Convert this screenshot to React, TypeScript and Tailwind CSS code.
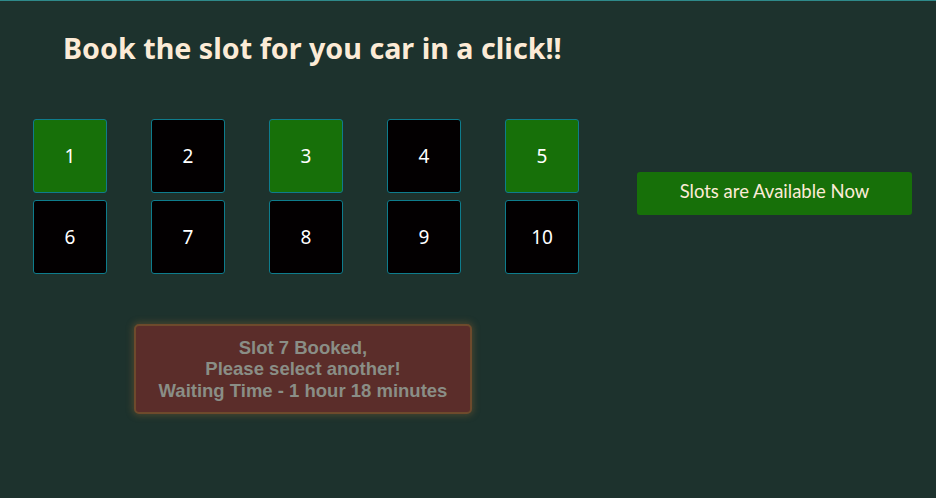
const SLOTS = [1, 2, 3, 4, 5, 6, 7, 8, 9, 10]
const FREE = [1, 3, 5]

function Slot({ n }: { n: number }) {
  const free = FREE.includes(n)
  return (
    <button
      className={
        'w-[74px] h-[74px] rounded-[3px] border border-[#0e7c8c] flex items-center justify-center text-white text-[19px] ' +
        (free ? 'bg-[#177009]' : 'bg-[#030001]')
      }
      style={{ fontFamily: '"Noto Sans", "Open Sans", sans-serif' }}
    >
      {n}
    </button>
  )
}

export default function App() {
  return (
    <div className="w-[936px] h-[498px] bg-[#1d322d] border-t border-[#2e8a8a] overflow-hidden">
      <h1
        className="pl-[63px] pt-[27px] text-[28.7px] font-bold text-[#fcebd6] leading-[40px]"
        style={{ fontFamily: '"Noto Sans", "Open Sans", sans-serif' }}
      >
        Book the slot for you car in a click!!
      </h1>

      <div className="flex items-start mt-[51px]">
        <div className="pl-[33px] grid grid-cols-[repeat(5,74px)] gap-x-[44px] gap-y-[7px]">
          {SLOTS.map((n) => (
            <Slot key={n} n={n} />
          ))}
        </div>

        <div
          className="ml-[58px] mt-[53px] w-[275px] h-[43px] rounded-[3px] bg-[#177009] text-[#fcebd6] text-[18.5px] flex items-center justify-center pb-[3px]"
          style={{ fontFamily: 'Lato, "Noto Sans", sans-serif' }}
        >
          Slots are Available Now
        </div>
      </div>

      <div className="pl-[134px] mt-[50px]">
        <div
          className="w-[338px] h-[90px] rounded-[5px] bg-[#5b2d2a] border-2 border-[#6e4a2c] shadow-[0_0_6px_2px_rgba(120,90,50,0.45)] flex flex-col items-center justify-center text-[#8a8e86] text-[18.5px] font-bold leading-[21.5px]"
          style={{ fontFamily: '"Liberation Sans", Arial, sans-serif' }}
        >
          <span>Slot 7 Booked,</span>
          <span>Please select another!</span>
          <span>Waiting Time - 1 hour 18 minutes</span>
        </div>
      </div>
    </div>
  )
}
